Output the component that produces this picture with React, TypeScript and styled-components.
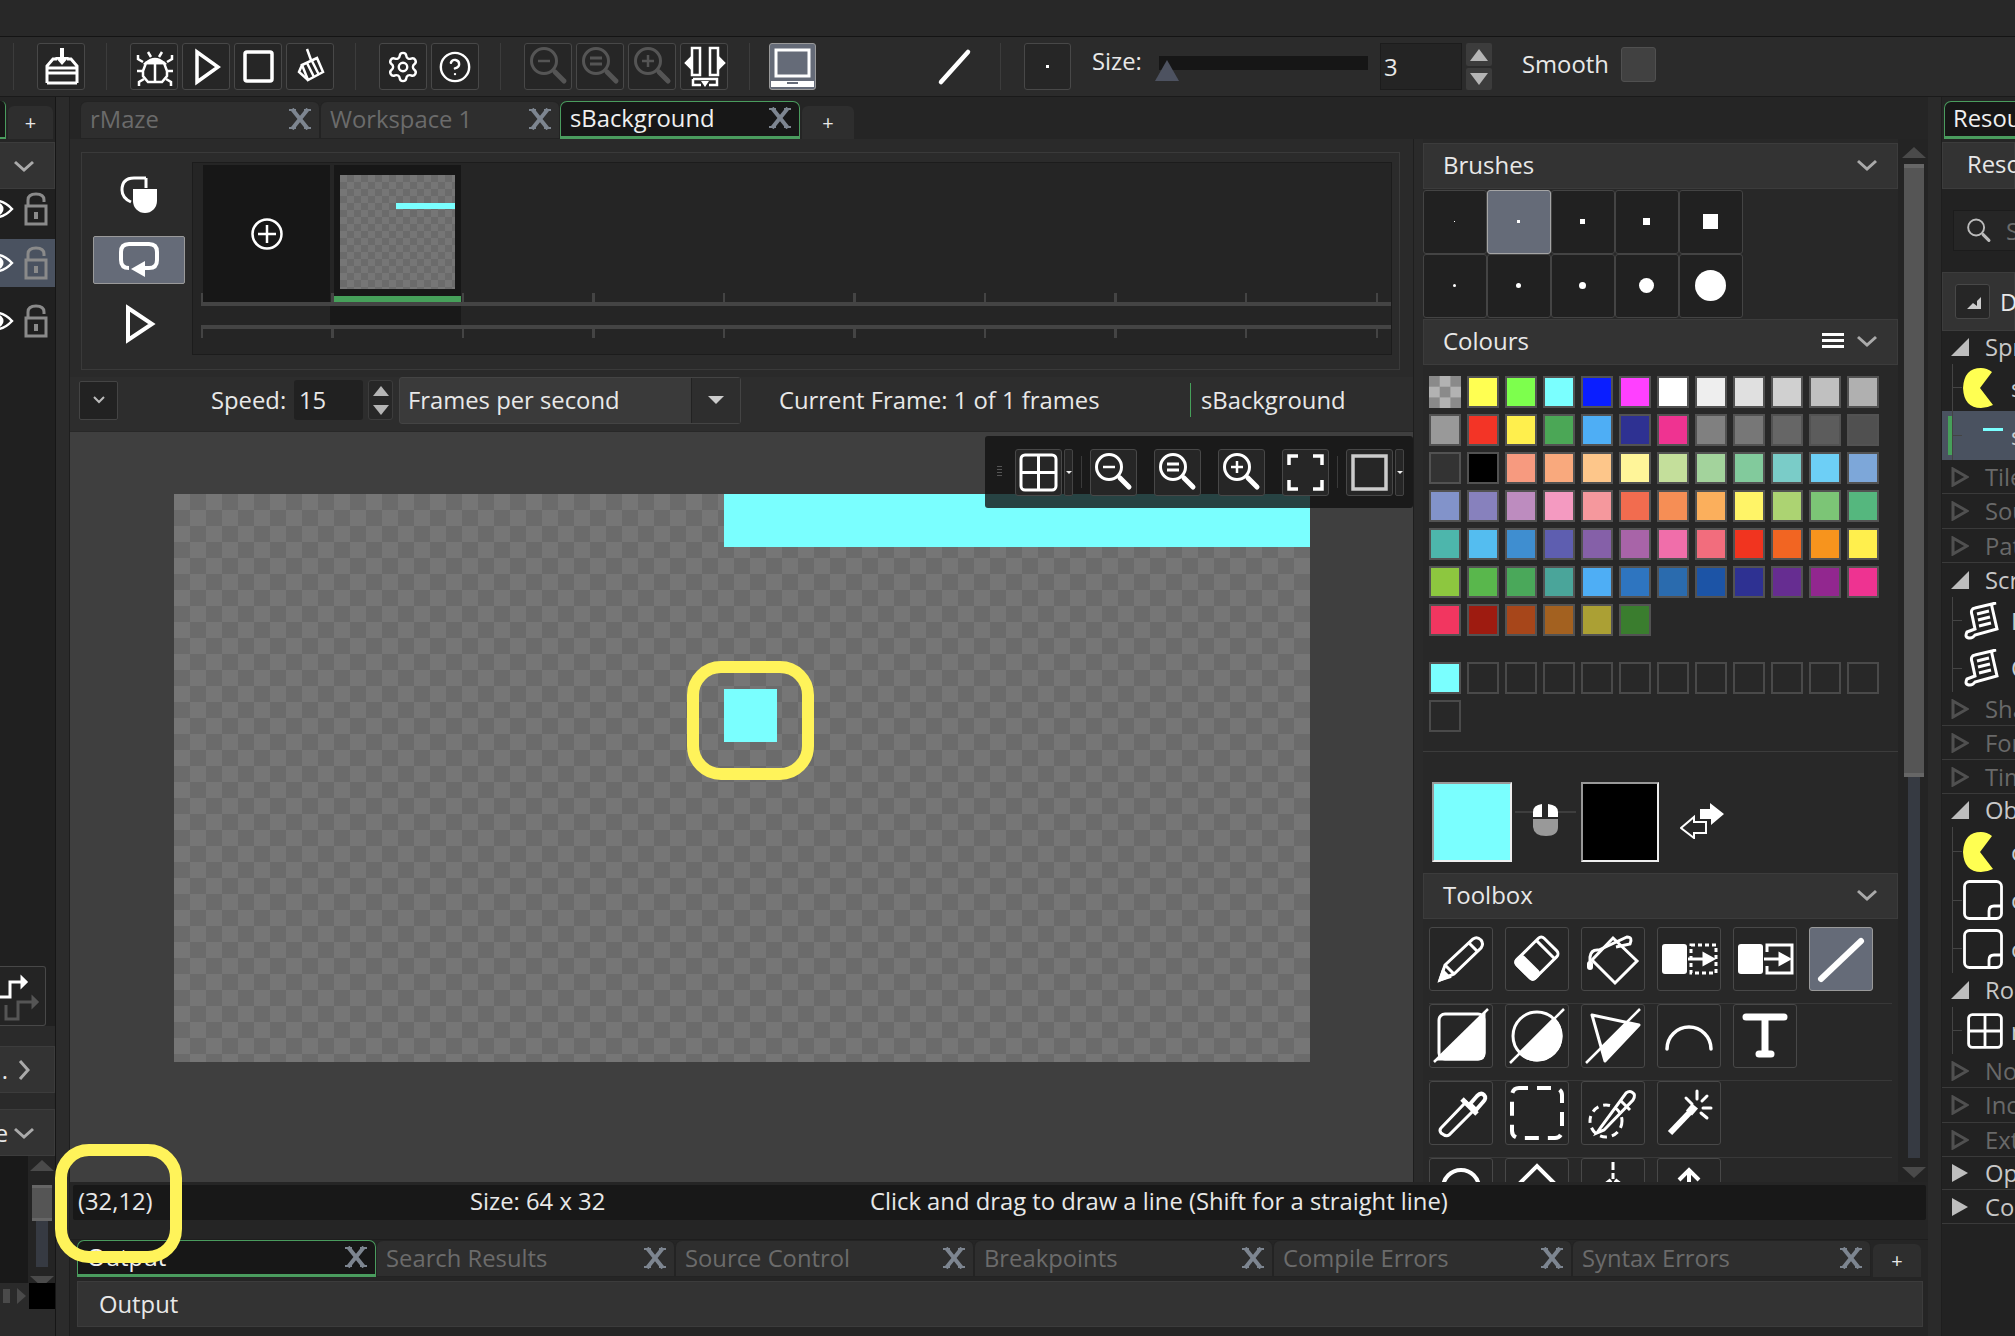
import React from 'react';
import styled, { createGlobalStyle } from 'styled-components';
import { Settings, CircleHelp } from 'lucide-react';

const GlobalStyle = createGlobalStyle`
  html, body { margin: 0; padding: 0; background: #252525; }
  * { box-sizing: border-box; }
  svg { flex: none; display: block; }
`;

const Page = styled.div`
  position: relative;
  width: 2015px;
  height: 1336px;
  overflow: hidden;
  display: flex;
  flex-direction: column;
  background: #252525;
  color: #e8e8e8;
  font-family: "Open Sans", "Noto Sans", sans-serif;
  font-size: 23.8px;
`;

const TitleBar = styled.div`
  height: 37px;
  flex: none;
  background: #282828;
  border-bottom: 1px solid #141414;
`;

const Toolbar = styled.div`
  height: 60px;
  flex: none;
  display: flex;
  align-items: center;
  background: #2b2b2b;
  border-bottom: 1px solid #1a1a1a;
`;

const Sep = styled.div`
  width: 1px;
  height: 47px;
  flex: none;
  margin: 0 23px 0 21px;
  background: #3c3c3c;
  &:first-child { margin-left: 13px; }
`;

const TightSep = styled(Sep)`
  margin-right: 19px;
`;

const ToolBtn = styled.div<{ $active?: boolean }>`
  width: 47px;
  height: 47px;
  flex: none;
  display: flex;
  align-items: center;
  justify-content: center;
  border-radius: 3px;
  background: ${(p) => (p.$active ? '#656b78' : '#262626')};
  border: 1px solid ${(p) => (p.$active ? '#9a9a9a' : '#484848')};
`;

const Group = styled.div`
  display: flex;
  gap: 4px;
  & > ${ToolBtn} { width: 48px; }
`;

const LineSlot = styled.div`
  width: 40px;
  height: 40px;
  margin: 0 4px 0 119px;
`;

const BrushBtn = styled(ToolBtn)`
  &::after { content: ""; width: 3px; height: 3px; background: #fff; }
`;

const Label = styled.span`
  width: 49px;
  flex: none;
  margin: 0 0 12px 21px;
  white-space: nowrap;
`;

const SizeSlider = styled.div`
  position: relative;
  width: 209px;
  height: 14px;
  margin: 0 0 8px 18px;
  background: #161616;
`;

const SliderThumb = styled.div`
  position: absolute;
  left: -4px;
  top: 4px;
  width: 0;
  height: 0;
  border-left: 12px solid transparent;
  border-right: 12px solid transparent;
  border-bottom: 21px solid #4d5260;
`;

const NumberBox = styled.div<{ $width: number }>`
  width: ${(p) => p.$width}px;
  height: 47px;
  margin-left: 12px;
  padding-left: 3px;
  display: flex;
  align-items: center;
  background: #242424;
  border: 1px solid #1c1c1c;
`;

const SpinCol = styled.div`
  width: 26px;
  margin-left: 4px;
  display: flex;
  flex-direction: column;
  gap: 2px;
`;

const SpinPart = styled.div<{ $down?: boolean; $height: number }>`
  height: ${(p) => p.$height}px;
  display: flex;
  align-items: center;
  justify-content: center;
  background: #3c3c3c;
  border-radius: 2px;
  &::after {
    content: "";
    border-left: 9px solid transparent;
    border-right: 9px solid transparent;
    ${(p) => (p.$down ? 'border-top: 12px solid #b5b5b5;' : 'border-bottom: 12px solid #b5b5b5;')}
  }
`;

const SmoothLabel = styled.span`
  width: 88px;
  flex: none;
  margin: 0 0 5px 30px;
  white-space: nowrap;
`;

const Check = styled.div`
  width: 35px;
  height: 35px;
  margin: 0 0 5px 11px;
  background: #414141;
  border: 1px solid #505050;
  border-radius: 3px;
`;

const Workspace = styled.div`
  flex: 1;
  min-height: 0;
  display: flex;
`;

/* left dock */
const LeftDock = styled.div`
  width: 56px;
  flex: none;
  display: flex;
  flex-direction: column;
  overflow: hidden;
  background: #202020;
  border-right: 1px solid #161616;
`;

const LeftTabs = styled.div`
  height: 45px;
  flex: none;
  display: flex;
  align-items: flex-end;
  padding-bottom: 3px;
  background: #252525;
`;

const StubTab = styled.div`
  width: 6px;
  height: 38px;
  border-right: 1px solid #4a9c5e;
  border-bottom: 2px solid #4a9c5e;
  border-top-right-radius: 5px;
  background: #171717;
`;

const PlusTab = styled.div<{ $width: number }>`
  width: ${(p) => p.$width}px;
  height: 33px;
  margin-left: 2px;
  display: flex;
  align-items: center;
  justify-content: center;
  background: #2e2e2e;
  border-radius: 6px 6px 0 0;
  font-size: 20px;
`;

const DockHeader = styled.div`
  height: 47px;
  flex: none;
  display: flex;
  align-items: center;
  justify-content: flex-end;
  gap: 6px;
  padding-right: 20px;
  background: #333;
  border: 1px solid #3c3c3c;
  border-left: 0;
`;

const LayerRow = styled.div<{ $active?: boolean; $height: number }>`
  height: ${(p) => p.$height}px;
  flex: none;
  margin-bottom: 10px;
  display: flex;
  align-items: center;
  justify-content: flex-end;
  gap: 9px;
  padding-right: 7px;
  background: ${(p) => (p.$active ? '#4a5260' : 'transparent')};
`;

const DockSpacer = styled.div`
  flex: 1;
`;

const PathBtn = styled.div`
  width: 46px;
  height: 60px;
  flex: none;
  display: flex;
  align-items: center;
  background: #242424;
  border: 1px solid #484848;
  border-left: 0;
  border-radius: 0 3px 3px 0;
`;

const DockGap = styled.div<{ $height: number }>`
  height: ${(p) => p.$height}px;
  flex: none;
  background: #2a2a2a;
`;

const ListStub = styled.div`
  height: 127px;
  flex: none;
  display: flex;
  justify-content: flex-end;
  background: #191919;
`;

const MiniScroll = styled.div`
  width: 27px;
  display: flex;
  flex-direction: column;
  align-items: center;
  padding-top: 4px;
  background: #242424;
`;

const MiniThumb = styled.div`
  width: 20px;
  height: 36px;
  margin-top: 8px;
  flex: none;
  background: #555;
  border-top: 3px solid #666;
  border-bottom: 3px solid #666;
`;

const MiniTrack = styled.div`
  width: 12px;
  height: 46px;
  flex: none;
  background: #363a42;
`;

const SwatchRow = styled.div`
  height: 26px;
  flex: none;
  display: flex;
  align-items: center;
  justify-content: flex-end;
  background: #2a2a2a;
`;

const NudgeLeft = styled.div`
  width: 7px;
  height: 14px;
  margin-right: 7px;
  background: #4a4a4a;
`;

const NudgeRight = styled.div`
  margin-right: 3px;
  border-top: 8px solid transparent;
  border-bottom: 8px solid transparent;
  border-left: 9px solid #4a4a4a;
`;

const SwatchBlack = styled.div`
  width: 26px;
  height: 100%;
  background: #000;
`;

const DockGutter = styled.div`
  width: 14px;
  flex: none;
  background: #2b2b2b;
  border-right: 1px solid #1e1e1e;
`;

/* centre */
const Center = styled.div`
  width: 1858px;
  flex: none;
  display: flex;
  flex-direction: column;
`;

const TabBar = styled.div`
  height: 42px;
  flex: none;
  display: flex;
  align-items: flex-end;
  padding-left: 10px;
`;

const DocTab = styled.div<{ $active?: boolean; $width: number; $height: number }>`
  width: ${(p) => p.$width}px;
  height: ${(p) => p.$height}px;
  flex: none;
  display: flex;
  align-items: center;
  justify-content: space-between;
  padding: 0 8px 2px 9px;
  white-space: nowrap;
  border-radius: 7px 7px 0 0;
  color: ${(p) => (p.$active ? '#f0f0f0' : '#6b6b6b')};
  background: ${(p) => (p.$active ? '#171717' : '#2e2e2e')};
  border: 1px solid ${(p) => (p.$active ? '#4a9c5e' : '#232323')};
  border-bottom: ${(p) => (p.$active ? '3px solid #4a9c5e' : '1px solid #232323')};
`;

const AddTab = styled(PlusTab)`
  margin-left: 2px;
`;

const EditorRow = styled.div`
  height: 1043px;
  flex: none;
  display: flex;
`;

const EditorMain = styled.div`
  width: 1343px;
  flex: none;
  display: flex;
  flex-direction: column;
  background: #2a2a2a;
`;

const TimelinePanel = styled.div`
  width: 1319px;
  height: 218px;
  flex: none;
  margin: 13px 0 7px 11px;
  display: flex;
  background: #2b2b2b;
  border: 1px solid #3a3a3a;
`;

const TimelineButtons = styled.div`
  width: 110px;
  flex: none;
  display: flex;
  flex-direction: column;
  align-items: center;
  padding: 21px 0 0 4px;
`;

const OnionSlot = styled.div`
  height: 40px;
  margin-bottom: 22px;
`;

const LoopBtn = styled.div`
  width: 92px;
  height: 48px;
  flex: none;
  display: flex;
  align-items: center;
  justify-content: center;
  background: #656b78;
  border: 1px solid #9a9a9a;
  border-radius: 2px;
`;

const PlaySlot = styled.div`
  margin-top: 20px;
`;

const Tracks = styled.div`
  width: 1200px;
  height: 193px;
  flex: none;
  margin-top: 9px;
  background: #252525;
  border: 1px solid #1c1c1c;
`;

const FrameRow = styled.div`
  height: 139px;
  display: flex;
  gap: 4px;
  padding: 2px 0 0 10px;
  background: repeating-linear-gradient(90deg, #444 0 2px, transparent 2px 130.5px) 8px 100% / 100% 9px no-repeat;
`;

const AddFrame = styled.div`
  width: 127px;
  height: 137px;
  display: flex;
  align-items: center;
  justify-content: center;
  background: #171717;
`;

const FrameCard = styled.div`
  width: 127px;
  height: 137px;
  display: flex;
  flex-direction: column;
  align-items: center;
  padding-top: 10px;
  background: #171717;
  border-bottom: 6px solid #46a05a;
`;

const Checker = styled.div`
  background: repeating-conic-gradient(var(--dark, #6b6b6b) 0 25%, var(--light, #767676) 0 50%) 0 0 / var(--cell) var(--cell);
`;

const FrameThumb = styled(Checker)`
  --cell: 14px;
  width: 115px;
  height: 114px;
  padding: 28px 0 0 56px;
  &::after { content: ""; display: block; height: 6px; background: #7affff; }
`;

const RulerLine = styled.div`
  height: 4px;
  margin-left: 8px;
  background: #444;
`;

const RulerGap = styled.div`
  height: 19px;
  padding-left: 137px;
  &::after { content: ""; display: block; width: 131px; height: 100%; background: #191919; }
`;

const RulerTicks = styled.div`
  height: 9px;
  margin-left: 8px;
  background: repeating-linear-gradient(90deg, #444 0 2px, transparent 2px 130.5px);
`;

const ControlBar = styled.div`
  height: 55px;
  flex: none;
  display: flex;
  align-items: center;
  padding-bottom: 8px;
  background: #2d2d2d;
  border-bottom: 1px solid #282828;
  white-space: nowrap;
`;

const SmallDrop = styled.div`
  width: 39px;
  height: 39px;
  margin-left: 9px;
  display: flex;
  align-items: center;
  justify-content: center;
  background: #222;
  border: 1px solid #444;
  border-radius: 2px;
`;

const SpeedLabel = styled.span`
  width: 83px;
  margin-left: 93px;
`;

const SpeedInput = styled.div`
  width: 69px;
  height: 40px;
  padding-left: 5px;
  display: flex;
  align-items: center;
  background: #212121;
  border-radius: 3px;
`;

const SpeedSpin = styled(SpinCol)`
  width: 25px;
  margin-left: 5px;
  gap: 0;
  background: #272727;
  border: 1px solid #3c3c3c;
  border-radius: 3px;
`;

const SpeedSpinPart = styled(SpinPart)`
  background: transparent;
  &::after { border-left-width: 8px; border-right-width: 8px; border-bottom-width: 10px; border-top-width: 10px; }
`;

const SelectBox = styled.div`
  width: 342px;
  height: 47px;
  margin-left: 6px;
  display: flex;
  align-items: center;
  padding-left: 8px;
  background: #3a3a3a;
  border: 1px solid #444;
  border-radius: 3px;
`;

const SelectText = styled.span`
  width: 283px;
`;

const SelectArrow = styled.div`
  flex: 1;
  height: 100%;
  display: flex;
  align-items: center;
  justify-content: center;
  background: #2e2e2e;
  border-left: 1px solid #222;
  &::after {
    content: "";
    border-left: 8px solid transparent;
    border-right: 8px solid transparent;
    border-top: 8px solid #ccc;
  }
`;

const FrameInfo = styled.span`
  width: 411px;
  margin-left: 38px;
`;

const SpriteName = styled.span`
  padding-left: 10px;
  line-height: 34px;
  border-left: 1px solid #46a05a;
`;

const Canvas = styled.div`
  position: relative;
  flex: 1;
  background: #3f3f3f;
`;

const SpriteArea = styled(Checker)`
  --cell: 32px;
  position: absolute;
  left: 104px;
  top: 62px;
  width: 1136px;
  height: 568px;
`;

const Pixels = styled.div<{ $x: number; $y: number; $w: number; $h: number }>`
  position: absolute;
  left: ${(p) => p.$x}px;
  top: ${(p) => p.$y}px;
  width: ${(p) => p.$w}px;
  height: ${(p) => p.$h}px;
  background: #7affff;
`;

const FloatBar = styled.div`
  position: absolute;
  top: 4px;
  right: 0;
  width: 428px;
  height: 72px;
  display: flex;
  align-items: center;
  padding-left: 30px;
  background: rgba(16, 16, 16, 0.79);
  border-radius: 3px;
`;

const FloatSep = styled.div`
  width: 1px;
  height: 32px;
  flex: none;
  margin: 0 8px;
  background: #3a3a3a;
`;

const Grip = styled.div`
  position: absolute;
  left: 12px;
  top: 30px;
  width: 5px;
  height: 12px;
  background: repeating-linear-gradient(180deg, #555 0 1px, transparent 1px 3px);
`;

const FloatDrop = styled.div`
  width: 9px;
  height: 47px;
  flex: none;
  margin-left: 2px;
  display: flex;
  align-items: center;
  justify-content: center;
  background: #262626;
  border: 1px solid #444;
  border-radius: 2px;
  &::after {
    content: "";
    border-left: 3px solid transparent;
    border-right: 3px solid transparent;
    border-top: 3px solid #eee;
  }
`;

const FloatBtn = styled(ToolBtn)`
  margin-right: 17px;
`;

const Gutter = styled.div`
  width: 10px;
  flex: none;
  background: #2a2a2a;
  border-left: 1px solid #1e1e1e;
`;

/* brushes / colours / tools */
const SidePanel = styled.div`
  width: 475px;
  flex: none;
  padding-top: 4px;
  overflow: hidden;
  background: #282828;
`;

const PanelHeader = styled.div`
  height: 46px;
  display: flex;
  align-items: center;
  gap: 13px;
  padding: 0 20px 3px 19px;
  background: #333;
  border: 1px solid #3c3c3c;
  font-size: 24px;
`;

const HeaderTitle = styled.span`
  flex: 1;
`;

const BrushGrid = styled.div`
  display: grid;
  grid-template-columns: repeat(5, 64px);
  grid-auto-rows: 64px;
  margin: 1px 0;
`;

const BrushCell = styled.div<{ $active?: boolean }>`
  display: flex;
  align-items: center;
  justify-content: center;
  padding: 0 2px 2px 0;
  background: ${(p) => (p.$active ? '#656b78' : '#212121')};
  border: 1px solid ${(p) => (p.$active ? '#a5a5a5' : '#444')};
  border-radius: 3px;
`;

const BrushDot = styled.div<{ $size: number; $round?: boolean }>`
  width: ${(p) => p.$size}px;
  height: ${(p) => p.$size}px;
  flex: none;
  background: #fff;
  border-radius: ${(p) => (p.$round ? '50%' : '0')};
`;

const SwatchGrid = styled.div`
  display: grid;
  grid-template-columns: repeat(12, 32px);
  grid-auto-rows: 32px;
  gap: 6px;
  padding: 0 0 0 6px;
`;

const ColourArea = styled.div`
  height: 387px;
  padding-top: 11px;
  border-bottom: 1px solid #3c3c3c;
`;

const Swatch = styled.div<{ $colour: string }>`
  background: ${(p) => p.$colour};
  border: 2px solid #525252;
`;

const ClearSwatch = styled(Checker)`
  --cell: 21.4px;
  --dark: #b2b2b2;
  --light: #8a8a8a;
`;

const CustomGrid = styled(SwatchGrid)`
  margin-top: 26px;
`;

const EmptySwatch = styled.div`
  border: 2px solid #4a4a4a;
`;

const ActiveColours = styled.div`
  height: 121px;
  display: flex;
  align-items: flex-start;
  padding: 30px 0 0 9px;
`;

const BigColour = styled.div<{ $colour: string; $width: number }>`
  width: ${(p) => p.$width}px;
  height: 80px;
  flex: none;
  background: ${(p) => p.$colour};
  border: 2px solid;
  border-color: #999 #eee #eee #999;
`;

const MouseSlot = styled.div`
  width: 69px;
  flex: none;
  margin-top: 22px;
`;

const SwapSlot = styled.div`
  margin: 21px 0 0 21px;
`;

const ToolRows = styled.div`
  padding-top: 8px;
`;

const ToolRow = styled.div`
  height: 77px;
  display: flex;
  gap: 12px;
  margin: 0 6px;
  border-bottom: 1px solid #383838;
`;

const BigTool = styled(ToolBtn)`
  width: 64px;
  height: 64px;
`;

const SideScroll = styled.div`
  width: 40px;
  flex: none;
  display: flex;
  flex-direction: column;
  align-items: center;
  padding: 8px 8px 0 0;
  background: #242424;
`;

const ScrollArrow = styled.div<{ $down?: boolean }>`
  flex: none;
  border-left: 12px solid transparent;
  border-right: 12px solid transparent;
  ${(p) => (p.$down ? 'border-top: 11px solid #4a4a4a; margin-top: 9px;' : 'border-bottom: 11px solid #4a4a4a; margin-bottom: 6px;')}
`;

const ScrollThumb = styled.div`
  width: 20px;
  height: 613px;
  flex: none;
  background: #555;
  border-top: 4px solid #666;
  border-bottom: 4px solid #666;
`;

const ScrollTrack = styled.div`
  width: 12px;
  height: 381px;
  flex: none;
  background: #363a42;
`;

const StatusBar = styled.div`
  height: 35px;
  flex: none;
  margin: 3px 2px 0 3px;
  padding: 0 0 3px 5px;
  display: grid;
  grid-template-columns: 392px 400px 1fr;
  align-items: center;
  background: #181818;
  border-radius: 2px;
`;

const StatusGap = styled.div`
  height: 20px;
  flex: none;
  border-bottom: 1px solid #1e1e1e;
`;

const BottomTabs = styled.div`
  height: 37px;
  flex: none;
  display: flex;
  align-items: flex-end;
  margin-left: 7px;
`;

const OutputHeader = styled.div`
  height: 46px;
  flex: none;
  margin: 4px 5px 0 7px;
  padding: 0 0 0 21px;
  display: flex;
  align-items: center;
  background: #333;
  border: 1px solid #3c3c3c;
`;

/* resources */
const ResourceDock = styled.div`
  flex: 1;
  min-width: 0;
  display: flex;
  overflow: hidden;
`;

const ResourceGutter = styled.div`
  width: 14px;
  flex: none;
  background: #2a2a2a;
  border-right: 1px solid #1e1e1e;
`;

const ResourceBody = styled.div`
  flex: 1;
  min-width: 0;
  overflow: hidden;
  white-space: nowrap;
  background: #222;
`;

const ResourceTabRow = styled.div`
  height: 45px;
  display: flex;
  align-items: flex-end;
  padding: 0 0 3px 2px;
  background: #252525;
`;

const ResourceTab = styled.div`
  width: 130px;
  height: 38px;
  flex: none;
  padding-left: 8px;
  line-height: 32px;
  color: #f0f0f0;
  background: #171717;
  border: 1px solid #4a9c5e;
  border-bottom: 3px solid #4a9c5e;
  border-radius: 7px 7px 0 0;
`;

const ResourceTitle = styled.div`
  height: 47px;
  padding-left: 24px;
  line-height: 43px;
  background: #333;
  border: 1px solid #3c3c3c;
`;

const SearchBox = styled.div`
  width: 120px;
  height: 41px;
  margin: 21px 0 21px 11px;
  padding-left: 10px;
  display: flex;
  align-items: center;
  gap: 12px;
  color: #6b6b6b;
  background: #262626;
  border: 1px solid #1c1c1c;
`;

const ViewRow = styled.div`
  height: 59px;
  display: flex;
  align-items: center;
  padding-left: 12px;
  gap: 10px;
  background: #333;
  border: 1px solid #3c3c3c;
`;

const ViewBtn = styled(ToolBtn)`
  width: 35px;
  height: 35px;
`;

const CategoryRow = styled.div<{ $height: number; $dim?: boolean; $bright?: boolean }>`
  height: ${(p) => p.$height}px;
  display: flex;
  align-items: center;
  gap: 16px;
  padding-left: 9px;
  color: ${(p) => (p.$dim ? '#696969' : '#c8c8c8')};
  border-bottom: 1px solid ${(p) => (p.$dim || p.$bright ? '#3a3a3a' : 'transparent')};
`;

const ChildRow = styled.div<{ $height: number; $active?: boolean }>`
  position: relative;
  height: ${(p) => p.$height}px;
  display: flex;
  align-items: center;
  gap: 8px;
  padding-left: 21px;
  color: #ccc;
  background:
    linear-gradient(#444, #444) 10px 0 / 1px 100% no-repeat,
    linear-gradient(#444, #444) 10px 50% / 10px 1px no-repeat,
    ${(p) => (p.$active ? '#4a5260' : 'transparent')};
`;

const GreenMark = styled.div`
  position: absolute;
  left: 6px;
  top: 5px;
  bottom: 5px;
  width: 4px;
  background: #46a05a;
`;

const IconSlot = styled.div`
  width: 40px;
  height: 40px;
  flex: none;
  display: flex;
  align-items: center;
`;

const Highlight = styled.div<{ $x: number; $y: number }>`
  position: absolute;
  left: ${(p) => p.$x}px;
  top: ${(p) => p.$y}px;
  width: 127px;
  height: 119px;
  border: 12px solid #fff35a;
  border-radius: 34px;
`;

/* ---- icons ---- */
const S = (p: React.SVGProps<SVGSVGElement> & { s?: number; c?: string; sw?: number; vb?: number }) => {
  const { s = 47, c = '#fff', sw = 3, vb, children, ...rest } = p;
  return (
    <svg width={s} height={s} viewBox={`0 0 ${vb ?? s} ${vb ?? s}`} fill="none" stroke={c} strokeWidth={sw} {...rest}>
      {children}
    </svg>
  );
};

const Chevron = ({ right }: { right?: boolean }) => (
  <svg width="20" height="20" viewBox="0 0 20 20" fill="none" stroke="#aaa" strokeWidth="3">
    <path d={right ? 'M6 1l8 9-8 9' : 'M1 6l9 8 9-8'} />
  </svg>
);

const CloseX = () => (
  <svg width="22" height="22" viewBox="0 0 22 22" fill="none" stroke="#7d8590" strokeWidth="4">
    <path d="M3 1l16 20M19 1L3 21" />
    <path d="M0 2h7M15 2h7M0 20h7M15 20h7" strokeWidth="2" />
  </svg>
);

const Magnifier = ({ kind, c = '#fff', s = 47 }: { kind: 'out' | 'fit' | 'in' | 'plain'; c?: string; s?: number }) => (
  <S c={c} s={s} vb={47}>
    <circle cx="19" cy="18" r="12.5" />
    <path d="M30 29l9 9" strokeWidth="5" strokeLinecap="round" />
    {(kind === 'out' || kind === 'in') && <path d="M13 18h12" strokeWidth="2.5" />}
    {kind === 'in' && <path d="M19 12v12" strokeWidth="2.5" />}
    {kind === 'fit' && <path d="M13 15h12M13 21h12" strokeWidth="3" />}
  </S>
);

const SaveIcon = () => (
  <S>
    <path d="M9 40V23l6-7h4M39 40V23l-6-7h-4M9 25h30M9 30h30M9 40h30" />
    <path d="M24 5v11" strokeWidth="4" />
    <path d="M17 14h14l-7 8z" fill="#fff" stroke="none" />
  </S>
);

const BugIcon = () => (
  <S sw={2.5}>
    <path d="M15 20h18l3 8v5l-5 6h-14l-5-6v-5z" />
    <path d="M15 20q9-8 18 0z" fill="#fff" />
    <path d="M24 20v19M17 9l3 5M31 9l-3 5M12 19l-5-3v-4M36 19l5-3v-4M12 28H6M36 28h6M13 36l-5 3v4M35 36l5 3v4" />
  </S>
);

const PlayIcon = () => (
  <S sw={3.5}>
    <path d="M14 9l21 15-21 15z" />
  </S>
);

const BigPlayIcon = () => (
  <S s={40} vb={40} sw={4}>
    <path d="M9 4l24 16-24 16z" />
  </S>
);

const BroomIcon = () => (
  <S sw={2.5}>
    <path d="M20 6l4 11M15 22l15-7 6 14-15 8z" />
    <path d="M20 20l7 14M25 18l7 14M15 22l-3 7 9 8" />
  </S>
);

const SplitIcon = () => (
  <S sw={2.5}>
    <path d="M11 5h8v27h-8zM29 5h8v27h-8z" />
    <path d="M9 16l-4 4 4 4zM39 16l4 4-4 4z" fill="#fff" />
    <path d="M12 36h24v6h-8M12 36v6h8" />
    <path d="M20 38h8l-4 6z" fill="#fff" stroke="none" />
  </S>
);

const LaptopIcon = () => (
  <S>
    <path d="M7 7h33v26H7z" />
    <path d="M2 38h43v6H2z" fill="#fff" stroke="none" />
    <path d="M18 40h11" stroke="#656b78" strokeWidth="2" />
  </S>
);

const LineToolIcon = () => (
  <S s={40} vb={40} sw={4.5}>
    <path d="M6 35L33 5" strokeLinecap="round" />
  </S>
);

const EyeIcon = () => (
  <S s={34} vb={34} c="#fff" sw={2.5}>
    <path d="M2 17q14-16 29 0q-15 16-29 0z" />
    <circle cx="16" cy="17" r="6.5" fill="#fff" stroke="none" />
  </S>
);

const LockIcon = () => (
  <svg width="24" height="34" viewBox="0 0 24 34" fill="none" stroke="#8a8a8a" strokeWidth="3">
    <path d="M4 14V8q0-6 8-6 8 0 8 6v2M2 14h20v18H2z" />
    <path d="M12 20v7" strokeWidth="4" />
  </svg>
);

const PlusCircle = () => (
  <S s={34} vb={34} sw={2.5}>
    <circle cx="17" cy="17" r="14.5" />
    <path d="M17 8v18M8 17h18" />
  </S>
);

const OnionIcon = () => (
  <S s={40} vb={40} sw={3}>
    <path d="M27 4H15Q3 4 3 16q0 8 9 12M27 4v10" />
    <path d="M14 15h24v12a12 12 0 0 1-24 0z" fill="#fff" stroke="none" />
  </S>
);

const LoopIcon = () => (
  <S s={40} vb={40} sw={4}>
    <path d="M10 28Q2 28 2 20v-8q0-8 8-8h20q8 0 8 8v8q0 8-8 8h-6" />
    <path d="M26 21v16l-14-8z" fill="#fff" stroke="none" />
  </S>
);

const GridIcon = ({ s = 47, c = '#fff' }: { s?: number; c?: string }) => (
  <S s={s} vb={47} sw={3} c={c}>
    <rect x="6" y="6" width="35" height="35" rx="4" />
    <path d="M23.5 6v35M6 23.5h35" />
  </S>
);

const FullscreenIcon = () => (
  <S sw={3.5}>
    <path d="M7 16V7h9M31 7h9v9M7 31v9h9M40 31v9h-9" />
  </S>
);

const FrameIcon = () => (
  <S sw={3.5} c="#ccc">
    <rect x="7" y="7" width="33" height="33" />
  </S>
);

const MouseIcon = () => (
  <svg width="69" height="36" viewBox="-20 0 69 36" fill="#fff">
    <path d="M-17 8H1M26 8H44" stroke="#555" strokeWidth="1" />
    <path d="M1 13V8Q1 1 10 0v13zM26 13V8Q26 1 16 0v13z" />
    <path d="M1 15h25v8q0 9-12 9T1 23z" fill="#999" />
  </svg>
);

const SwapIcon = () => (
  <svg width="44" height="36" viewBox="0 0 44 36" fill="none">
    <path d="M20 6h10V0l14 11-13 11v-6H20z" fill="#fff" />
    <path d="M26 19H14v-5L1 25l13 10v-5h12z" stroke="#fff" strokeWidth="2" fill="#282828" />
  </svg>
);

const T = ({ children }: { children: React.ReactNode }) => (
  <S s={64} vb={64}>
    {children}
  </S>
);

const toolRows: React.ReactNode[][] = [
  [
    <T><path d="M11 53l5-15 28-26q4-3 8 1 3 4 0 8L25 47z" /><path d="M40 16l9 9M16 38l9 9" /><path d="M11 53l3-9 6 6z" fill="#fff" /></T>,
    <T><g transform="rotate(-45 32 31)"><rect x="13" y="18" width="38" height="26" rx="4" /><rect x="13" y="18" width="10" height="26" rx="3" fill="#fff" /><path d="M44 18v26" /></g></T>,
    <T><path d="M32 11l24 23-22 22-23-23z" /><path d="M9 38V30q1-8 9-7l28-13q6 0 3 7l-14 3" /><path d="M9 37v3" strokeWidth="6" strokeLinecap="round" /></T>,
    <T><rect x="5" y="17" width="25" height="30" rx="3" fill="#fff" stroke="none" /><path d="M31 32h17" /><path d="M47 27l9 5-9 5z" fill="#fff" /><rect x="34" y="18" width="25" height="28" strokeDasharray="4 3" /></T>,
    <T><rect x="5" y="17" width="25" height="30" rx="3" fill="#fff" stroke="none" /><path d="M31 32h17" /><path d="M47 27l9 5-9 5z" fill="#fff" /><path d="M34 25v-7h25v28H34v-7" /></T>,
    <T><path d="M12 52L52 14" strokeWidth="6" strokeLinecap="round" /></T>,
  ],
  [
    <T><rect x="10" y="10" width="45" height="45" rx="6" /><path d="M55 11v38q0 6-6 6H11z" fill="#fff" /><path d="M5 58L59 5" strokeWidth="2.5" /></T>,
    <T><circle cx="32" cy="32" r="24" /><path d="M49 15a24 24 0 0 1-34 34z" fill="#fff" /><path d="M5 59L59 5" strokeWidth="2.5" /></T>,
    <T><path d="M11 11l47 10-34 36z" strokeLinejoin="round" /><path d="M46 18l12 3-34 36-4-13z" fill="#fff" stroke="none" /><path d="M5 59L59 5" strokeWidth="2.5" /></T>,
    <T><path d="M10 45a22 22 0 0 1 44 0" strokeWidth="3.5" strokeLinecap="round" /></T>,
    <T><path d="M13 13h38" strokeWidth="7" strokeLinecap="round" /><path d="M32 14v36" strokeWidth="7" /><path d="M26 50h12" strokeWidth="7" strokeLinecap="round" /></T>,
  ],
  [
    <T><path d="M12 52q-2-3 0-5l25-26 8 8-25 25q-3 2-8-2z" /><path d="M33 18l15 15" strokeWidth="5" /><path d="M41 23l7-8q4-4 7-1t-1 7l-7 8z" strokeWidth="4" /></T>,
    <T><rect x="7" y="7" width="50" height="50" rx="7" strokeWidth="4" strokeDasharray="14 9" strokeDashoffset="5" /></T>,
    <T><circle cx="25" cy="40" r="16" strokeDasharray="7 5" /><path d="M20 46l-4 6 7-3 29-30q3-5 0-7-3-3-7 0z" /><path d="M40 20l9 9" /></T>,
    <T><path d="M13 52l22-23" strokeWidth="6" /><path d="M32 32l6-7" strokeWidth="8" /><path d="M40 10v8M50 15l-5 5M54 27h-8M50 37l-6-5M29 17l6 6" strokeLinecap="round" /></T>,
  ],
  [
    <T><path d="M14 30a18 18 0 0 1 36 0" strokeWidth="4" /></T>,
    <T><path d="M10 30l22-22 22 22" strokeWidth="4" /></T>,
    <T><path d="M32 4v8M32 15v6" strokeWidth="3" /><path d="M30 22L20 30M34 22l10 8" strokeWidth="4" /></T>,
    <T><path d="M22 22l10-10 10 10M32 12v16" strokeWidth="4" /></T>,
  ],
];

const Pacman = () => (
  <svg width="32" height="40" viewBox="0 0 32 40">
    <path d="M29 4L17 20l13 17q-6 3-12 3Q1 40 0 20 1 0 18 0q6 0 11 4z" fill="#ffff52" />
  </svg>
);

const ScriptIcon = () => (
  <svg width="40" height="38" viewBox="0 0 40 38" fill="none" stroke="#fff" strokeWidth="3">
    <path d="M4 30q-3 6 3 6 3 0 5-3l22-6-5-22q-1-4 4-4L12 6Q7 7 9 13l3 14-8 3z" />
    <path d="M14 12l12-3M15 18l12-3M16 24l12-3" />
  </svg>
);

const ObjectIcon = () => (
  <S s={40} vb={40} sw={2.8}>
    <rect x="1.5" y="1.5" width="37" height="37" rx="5" />
    <path d="M26 38v-7q0-5 5-5h7" />
  </S>
);

const TriOpen = () => (
  <svg width="18" height="18" viewBox="0 0 18 18"><path d="M0 18L18 0v18z" fill="#bdbdbd" /></svg>
);

const TriClosed = ({ dim }: { dim?: boolean }) => (
  <svg width="18" height="20" viewBox="0 0 18 20">
    {dim ? <path d="M2 2l14 8-14 8z" fill="none" stroke="#505050" strokeWidth="3" /> : <path d="M1 1l16 9-16 9z" fill="#bdbdbd" />}
  </svg>
);

const PathIcon = () => (
  <svg width="46" height="60" viewBox="0 0 46 60" fill="none" strokeWidth="3">
    <path d="M6 39v14h12V36h18" stroke="#555" />
    <path d="M0 31h10V16h14" stroke="#fff" />
    <path d="M22 12l4 4-4 4z" fill="#fff" stroke="#fff" />
    <path d="M33 32l4 4-4 4z" fill="#555" stroke="#555" />
  </svg>
);

const swatches = [
  '#ffff52', '#7dff4d', '#7affff', '#0a1eff', '#ff40ff', '#ffffff', '#eeeeee', '#e0e0e0', '#d0d0d0', '#c0c0c0', '#b0b0b0',
  '#999999', '#f33426', '#ffef4d', '#4ba756', '#4eaef5', '#2e3192', '#ef3391', '#808080', '#777777', '#666666', '#5c5c5c', '#505050',
  '#333333', '#000000', '#f79a7f', '#f9a97d', '#fdc68a', '#fff599', '#c4df9b', '#a3d39c', '#82ca9c', '#7accc8', '#6dcff6', '#7da7d9',
  '#8293ca', '#8781bd', '#bd8cbf', '#f49ac1', '#f5989d', '#f26c4f', '#f68e55', '#fbaf5c', '#fff467', '#acd372', '#7cc576', '#55b77e',
  '#4db6ac', '#54bdf0', '#3f8ed0', '#5e5eb0', '#8560a8', '#a864a8', '#f06eaa', '#f26d7d', '#f1341f', '#f26522', '#f7941d', '#ffef4d',
  '#8dc73f', '#59b74c', '#4aa85a', '#4aa59a', '#4eaef5', '#2e75c0', '#2a6bae', '#1c54a6', '#2e3192', '#662d91', '#92278f', '#ee3391',
  '#f23660', '#9e1b10', '#a7461a', '#a36120', '#aba034', '#3a7d2e',
];

const squareBrushes = [1, 3, 5, 7, 15];
const roundBrushes = [3, 5, 7, 15, 31];
const bottomTabs = ['Output', 'Search Results', 'Source Control', 'Breakpoints', 'Compile Errors', 'Syntax Errors'];
const layerRows = [
  { height: 40, active: false },
  { height: 48, active: true },
  { height: 48, active: false },
];

type TreeItem =
  | { kind: 'open' | 'closed' | 'dim'; label: string; height: number }
  | { kind: 'child'; label: string; height: number; icon: React.ReactNode; active?: boolean };

const tree: TreeItem[] = [
  { kind: 'open', label: 'Sprites', height: 33 },
  { kind: 'child', label: 'sPlayer', height: 47, icon: <Pacman /> },
  { kind: 'child', label: 'sBackground', height: 49, active: true, icon: <svg width="40" height="40"><rect x="20" y="12" width="20" height="3" fill="#7affff" /></svg> },
  { kind: 'dim', label: 'Tile Sets', height: 34 },
  { kind: 'dim', label: 'Sounds', height: 35 },
  { kind: 'dim', label: 'Paths', height: 34 },
  { kind: 'open', label: 'Scripts', height: 34 },
  { kind: 'child', label: 'MazeGen', height: 47, icon: <ScriptIcon /> },
  { kind: 'child', label: 'Cells', height: 48, icon: <ScriptIcon /> },
  { kind: 'dim', label: 'Shaders', height: 34 },
  { kind: 'dim', label: 'Fonts', height: 34 },
  { kind: 'dim', label: 'Timelines', height: 34 },
  { kind: 'open', label: 'Objects', height: 33 },
  { kind: 'child', label: 'oPlayer', height: 49, icon: <Pacman /> },
  { kind: 'child', label: 'oWall', height: 48, icon: <ObjectIcon /> },
  { kind: 'child', label: 'oGoal', height: 49, icon: <ObjectIcon /> },
  { kind: 'open', label: 'Rooms', height: 34 },
  { kind: 'child', label: 'rMaze', height: 47, icon: <GridIcon s={44} /> },
  { kind: 'dim', label: 'Notes', height: 34 },
  { kind: 'dim', label: 'Included Files', height: 35 },
  { kind: 'dim', label: 'Extensions', height: 34 },
  { kind: 'closed', label: 'Options', height: 33 },
  { kind: 'closed', label: 'Configurations', height: 34 },
];

export default function App() {
  return (
    <Page>
      <GlobalStyle />
      <TitleBar />
      <Toolbar>
        <Sep />
        <Group><ToolBtn><SaveIcon /></ToolBtn></Group>
        <Sep />
        <Group>
          <ToolBtn><BugIcon /></ToolBtn>
          <ToolBtn><PlayIcon /></ToolBtn>
          <ToolBtn><S sw={3.5}><rect x="10" y="9" width="27" height="29" rx="2" /></S></ToolBtn>
          <ToolBtn><BroomIcon /></ToolBtn>
        </Group>
        <Sep />
        <Group>
          <ToolBtn><Settings size={34} color="#fff" strokeWidth={1.7} /></ToolBtn>
          <ToolBtn><CircleHelp size={34} color="#fff" strokeWidth={1.7} /></ToolBtn>
        </Group>
        <Sep />
        <Group>
          <ToolBtn><Magnifier kind="out" c="#555" /></ToolBtn>
          <ToolBtn><Magnifier kind="fit" c="#555" /></ToolBtn>
          <ToolBtn><Magnifier kind="in" c="#555" /></ToolBtn>
          <ToolBtn><SplitIcon /></ToolBtn>
        </Group>
        <TightSep />
        <ToolBtn $active><LaptopIcon /></ToolBtn>
        <LineSlot><LineToolIcon /></LineSlot>
        <Sep />
        <BrushBtn />
        <Label>Size:</Label>
        <SizeSlider><SliderThumb /></SizeSlider>
        <NumberBox $width={82}>3</NumberBox>
        <SpinCol>
          <SpinPart $height={23} />
          <SpinPart $height={22} $down />
        </SpinCol>
        <SmoothLabel>Smooth</SmoothLabel>
        <Check />
      </Toolbar>

      <Workspace>
        <LeftDock>
          <LeftTabs>
            <StubTab />
            <PlusTab $width={45}>+</PlusTab>
          </LeftTabs>
          <DockHeader><Chevron /></DockHeader>
          {layerRows.map((row, i) => (
            <LayerRow key={i} $active={row.active} $height={row.height}>
              <EyeIcon />
              <LockIcon />
            </LayerRow>
          ))}
          <DockSpacer />
          <PathBtn><PathIcon /></PathBtn>
          <DockGap $height={20} />
          <DockHeader>. <Chevron right /></DockHeader>
          <DockGap $height={16} />
          <DockHeader>e <Chevron /></DockHeader>
          <ListStub>
            <MiniScroll>
              <ScrollArrow />
              <MiniThumb />
              <MiniTrack />
              <ScrollArrow $down />
            </MiniScroll>
          </ListStub>
          <SwatchRow>
            <NudgeLeft />
            <NudgeRight />
            <SwatchBlack />
          </SwatchRow>
          <DockGap $height={27} />
        </LeftDock>
        <DockGutter />

        <Center>
          <TabBar>
            <DocTab $width={240} $height={38}>rMaze<CloseX /></DocTab>
            <DocTab $width={240} $height={38}>Workspace 1<CloseX /></DocTab>
            <DocTab $width={240} $height={38} $active>sBackground<CloseX /></DocTab>
            <AddTab $width={52}>+</AddTab>
          </TabBar>

          <EditorRow>
            <EditorMain>
              <TimelinePanel>
                <TimelineButtons>
                  <OnionSlot><OnionIcon /></OnionSlot>
                  <LoopBtn><LoopIcon /></LoopBtn>
                  <PlaySlot><BigPlayIcon /></PlaySlot>
                </TimelineButtons>
                <Tracks>
                  <FrameRow>
                    <AddFrame><PlusCircle /></AddFrame>
                    <FrameCard><FrameThumb /></FrameCard>
                  </FrameRow>
                  <RulerLine />
                  <RulerGap />
                  <RulerLine />
                  <RulerTicks />
                </Tracks>
              </TimelinePanel>

              <ControlBar>
                <SmallDrop>
                  <svg width="14" height="10" viewBox="0 0 14 10" fill="none" stroke="#bbb" strokeWidth="2"><path d="M2 2l5 5 5-5" /></svg>
                </SmallDrop>
                <SpeedLabel>Speed:</SpeedLabel>
                <SpeedInput>15</SpeedInput>
                <SpeedSpin>
                  <SpeedSpinPart $height={19} />
                  <SpeedSpinPart $height={19} $down />
                </SpeedSpin>
                <SelectBox>
                  <SelectText>Frames per second</SelectText>
                  <SelectArrow />
                </SelectBox>
                <FrameInfo>Current Frame: 1 of 1 frames</FrameInfo>
                <SpriteName>sBackground</SpriteName>
              </ControlBar>

              <Canvas>
                <SpriteArea>
                  <Pixels $x={550} $y={0} $w={586} $h={53} />
                  <Pixels $x={550} $y={195} $w={53} $h={53} />
                </SpriteArea>
                <FloatBar>
                  <Grip />
                  <ToolBtn><GridIcon /></ToolBtn>
                  <FloatDrop />
                  <FloatSep />
                  <FloatBtn><Magnifier kind="out" /></FloatBtn>
                  <FloatBtn><Magnifier kind="fit" /></FloatBtn>
                  <FloatBtn><Magnifier kind="in" /></FloatBtn>
                  <ToolBtn><FullscreenIcon /></ToolBtn>
                  <FloatSep />
                  <ToolBtn><FrameIcon /></ToolBtn>
                  <FloatDrop />
                </FloatBar>
              </Canvas>
            </EditorMain>
            <Gutter />

            <SidePanel>
              <PanelHeader><HeaderTitle>Brushes</HeaderTitle><Chevron /></PanelHeader>
              <BrushGrid>
                {squareBrushes.map((size, i) => (
                  <BrushCell key={size} $active={i === 1}><BrushDot $size={size} /></BrushCell>
                ))}
                {roundBrushes.map((size) => (
                  <BrushCell key={size}><BrushDot $size={size} $round /></BrushCell>
                ))}
              </BrushGrid>
              <PanelHeader>
                <HeaderTitle>Colours</HeaderTitle>
                <svg width="22" height="16" viewBox="0 0 22 16" fill="#fff"><path d="M0 0h22v3H0zM0 6h22v3H0zM0 12h22v3H0z" /></svg>
                <Chevron />
              </PanelHeader>
              <ColourArea>
                <SwatchGrid>
                  <ClearSwatch />
                  {swatches.map((colour, i) => <Swatch key={i} $colour={colour} />)}
                </SwatchGrid>
                <CustomGrid>
                  <Swatch $colour="#7affff" />
                  {Array.from({ length: 12 }, (_, i) => <EmptySwatch key={i} />)}
                </CustomGrid>
              </ColourArea>
              <ActiveColours>
                <BigColour $colour="#7affff" $width={80} />
                <MouseSlot><MouseIcon /></MouseSlot>
                <BigColour $colour="#000" $width={78} />
                <SwapSlot><SwapIcon /></SwapSlot>
              </ActiveColours>
              <PanelHeader><HeaderTitle>Toolbox</HeaderTitle><Chevron /></PanelHeader>
              <ToolRows>
                {toolRows.map((row, r) => (
                  <ToolRow key={r}>
                    {row.map((icon, i) => (
                      <BigTool key={i} $active={r === 0 && i === 5}>{icon}</BigTool>
                    ))}
                  </ToolRow>
                ))}
              </ToolRows>
            </SidePanel>

            <SideScroll>
              <ScrollArrow />
              <ScrollThumb />
              <ScrollTrack />
              <ScrollArrow $down />
            </SideScroll>
          </EditorRow>

          <StatusBar>
            <span>(32,12)</span>
            <span>Size: 64 x 32</span>
            <span>Click and drag to draw a line (Shift for a straight line)</span>
          </StatusBar>
          <StatusGap />
          <BottomTabs>
            {bottomTabs.map((name, i) => (
              <DocTab key={name} $width={299} $height={37} $active={i === 0}>{name}<CloseX /></DocTab>
            ))}
            <AddTab $width={48}>+</AddTab>
          </BottomTabs>
          <OutputHeader>Output</OutputHeader>
        </Center>

        <ResourceDock>
          <ResourceGutter />
          <ResourceBody>
            <ResourceTabRow><ResourceTab>Resources</ResourceTab></ResourceTabRow>
            <ResourceTitle>Resources</ResourceTitle>
            <SearchBox>
              <Magnifier kind="plain" c="#bbb" s={30} />
              Search...
            </SearchBox>
            <ViewRow>
              <ViewBtn>
                <svg width="16" height="14" viewBox="0 0 16 14" fill="#ccc"><path d="M16 2v12H2l6-6 4 3V6z" /></svg>
              </ViewBtn>
              Default
            </ViewRow>
            {tree.map((item) =>
              item.kind === 'child' ? (
                <ChildRow key={item.label} $height={item.height} $active={item.active}>
                  {item.active && <GreenMark />}
                  <IconSlot>{item.icon}</IconSlot>
                  {item.label}
                </ChildRow>
              ) : (
                <CategoryRow key={item.label} $height={item.height} $dim={item.kind === 'dim'} $bright={item.kind === 'closed'}>
                  {item.kind === 'open' ? <TriOpen /> : <TriClosed dim={item.kind === 'dim'} />}
                  {item.label}
                </CategoryRow>
              )
            )}
          </ResourceBody>
        </ResourceDock>
      </Workspace>

      <Highlight $x={55} $y={1144} />
      <Highlight $x={687} $y={661} />
    </Page>
  );
}
